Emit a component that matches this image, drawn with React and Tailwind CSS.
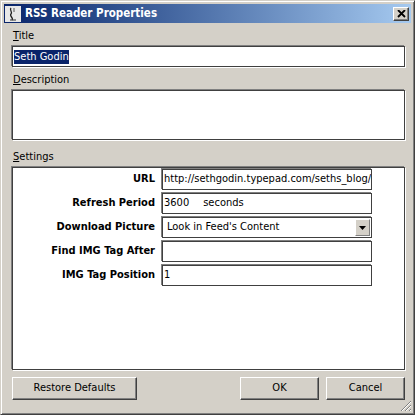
import React from "react";

const font = { fontFamily: '"DejaVu Sans Condensed", "Liberation Sans", Arial, sans-serif' };

const sunken =
	"border border-[#404040] shadow-[-1px_-1px_0_#808080,1px_1px_0_#ffffff] bg-white";
const raised =
	"border border-t-white border-l-white border-r-[#404040] border-b-[#404040] shadow-[inset_-1px_-1px_0_#808080] bg-[#d4d0c8]";

const Label = ({ first, rest, className = "" }) => (
	<div className={`text-[11px] leading-[14px] text-black ${className}`}>
		<span className="underline">{first}</span>
		{rest}
	</div>
);

const Row = ({ label, children }) => (
	<div className="flex items-center h-[21px]">
		<div className="w-[149px] pr-[7px] text-right font-bold text-[11px] text-black whitespace-nowrap">
			{label}
		</div>
		<div className={`${sunken} w-[210px] h-[21px] flex items-center px-[1px] text-[11px] text-black overflow-hidden whitespace-nowrap`}>
			{children}
		</div>
	</div>
);

const AppIcon = () => (
	<svg width="16" height="16" viewBox="0 0 16 16">
		<rect x="0" y="0" width="16" height="16" fill="#e8e8e8" />
		<path d="M6 2 C4 4 8 6 6 8 C4 10 9 12 7 14" stroke="#222" strokeWidth="1.3" fill="none" />
		<path d="M9 2 L9 6" stroke="#555" strokeWidth="1" />
		<path d="M5 14 L11 14" stroke="#333" strokeWidth="1" />
	</svg>
);

export default function App() {
	return (
		<div
			style={font}
			className="w-[415px] h-[415px] bg-[#d4d0c8] border border-t-[#d4d0c8] border-l-[#d4d0c8] border-r-[#404040] border-b-[#404040] shadow-[inset_1px_1px_0_#ffffff,inset_-1px_-1px_0_#808080] p-[3px] flex flex-col relative"
		>
			{/* Title bar */}
			<div className="h-[19px] flex items-center bg-gradient-to-r from-[#0a246a] to-[#a6caf0] pl-[1px] pr-[2px]">
				<AppIcon />
				<span className="ml-[4px] text-white font-bold text-[11.5px]">
					RSS Reader Properties
				</span>
				<div className={`ml-auto w-[16px] h-[14px] ${raised} flex items-center justify-center`}>
					<svg width="9" height="8" viewBox="0 0 9 8">
						<path d="M1 0 L8 7 M8 0 L1 7" stroke="#000" strokeWidth="1.8" />
					</svg>
				</div>
			</div>

			{/* Body */}
			<div className="flex-1 flex flex-col pl-[8px] pr-[6px] pt-[6px]">
				<Label first="T" rest="itle" className="mb-[3px] ml-[1px]" />
				<div className={`${sunken} h-[21px] flex items-center px-[1px]`}>
					<span className="bg-[#0a246a] text-white text-[11px] leading-[14px]">Seth Godin</span>
				</div>

				<Label first="D" rest="escription" className="mt-[6px] mb-[3px] ml-[1px]" />
				<div className={`${sunken} h-[50px]`} />

				<Label first="S" rest="ettings" className="mt-[10px] mb-[3px] ml-[1px]" />
				<div className={`${sunken} h-[203px] pt-[1px] flex flex-col gap-[3px]`}>
					<Row label="URL">http://sethgodin.typepad.com/seths_blog/atom.xml</Row>
					<Row label="Refresh Period">
						<span>3600</span>
						<span className="ml-[14px]">seconds</span>
					</Row>
					<Row label="Download Picture">
						<span className="pl-[3px]">Look in Feed's Content</span>
						<div className="ml-auto w-[15px] h-[17px] bg-[#d4d0c8] flex items-center justify-center border border-t-white border-l-white border-r-[#808080] border-b-[#808080]">
							<svg width="7" height="4" viewBox="0 0 7 4">
								<path d="M0 0 L7 0 L3.5 4 Z" fill="#000" />
							</svg>
						</div>
					</Row>
					<Row label="Find IMG Tag After" />
					<Row label="IMG Tag Position">1</Row>
				</div>

				{/* Buttons */}
				<div className="flex mt-[7px] items-center">
					<button className={`${raised} w-[125px] h-[23px] text-[11px] text-black`}>
						Restore Defaults
					</button>
					<button className={`${raised} ml-auto w-[79px] h-[23px] text-[11px] text-black`}>
						OK
					</button>
					<button className={`${raised} ml-[7px] w-[79px] h-[23px] text-[11px] text-black`}>
						Cancel
					</button>
				</div>
			</div>

			{/* Resize grip */}
			<svg className="absolute right-[2px] bottom-[2px]" width="12" height="12" viewBox="0 0 12 12">
				<path d="M11 1 L1 11 M11 5 L5 11 M11 9 L9 11" stroke="#808080" strokeWidth="1" />
				<path d="M11 2 L2 11 M11 6 L6 11 M11 10 L10 11" stroke="#ffffff" strokeWidth="1" />
			</svg>
		</div>
	);
}
